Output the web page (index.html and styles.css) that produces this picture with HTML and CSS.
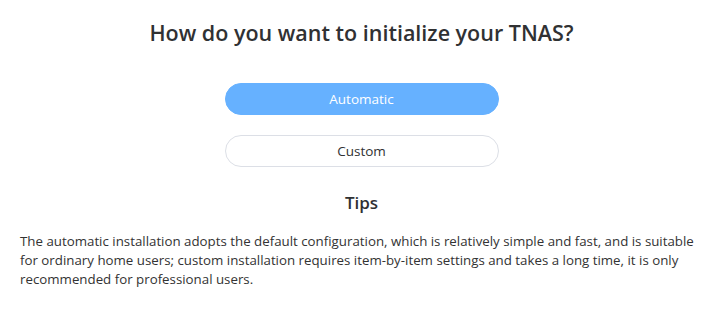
FILE: index.html
```html
<!DOCTYPE html>
<html lang="en">
<head>
  <meta charset="UTF-8" />
  <title>Initialize TNAS</title>
  <link rel="stylesheet" href="styles.css">
</head>
<body>
  <div class="init-page">
    <h2 class="init-title">How do you want to initialize your TNAS?</h2>

    <div class="init-buttons">
      <button class="btn btn-primary">Automatic</button>
      <button class="btn btn-plain">Custom</button>
    </div>

    <h3 class="tips-title">Tips</h3>
    <p class="tips-text">The automatic installation adopts the default configuration, which is relatively simple and fast, and is suitable for ordinary home users; custom installation requires item-by-item settings and takes a long time, it is only recommended for professional users.</p>
  </div>
</body>
</html>
```

FILE: styles.css
```css
* {
  margin: 0;
  padding: 0;
  box-sizing: border-box;
}

body {
  font-family: "Open Sans", "Noto Sans", sans-serif;
  background-color: #fff;
  color: #333;
}

.init-page {
  display: flex;
  flex-direction: column;
  align-items: center;
  padding: 19px 12px 0 20px;
}

.init-title {
  font-size: 21.5px;
  font-weight: 600;
  color: #303133;
  line-height: 28px;
}

.init-buttons {
  display: flex;
  flex-direction: column;
  gap: 20px;
  margin-top: 36px;
}

.btn {
  width: 274px;
  height: 32px;
  border-radius: 16px;
  font-family: inherit;
  font-size: 13.5px;
  cursor: pointer;
}

.btn-primary {
  background-color: #66b1ff;
  border: 1px solid #66b1ff;
  color: #fff;
}

.btn-plain {
  background-color: #fff;
  border: 1px solid #dcdfe6;
  color: #303133;
}

.tips-title {
  margin-top: 24px;
  font-size: 17px;
  font-weight: 600;
  color: #303133;
  line-height: 24px;
}

.tips-text {
  align-self: stretch;
  margin-top: 17px;
  font-size: 13.3px;
  line-height: 19px;
  color: #333;
}
```
